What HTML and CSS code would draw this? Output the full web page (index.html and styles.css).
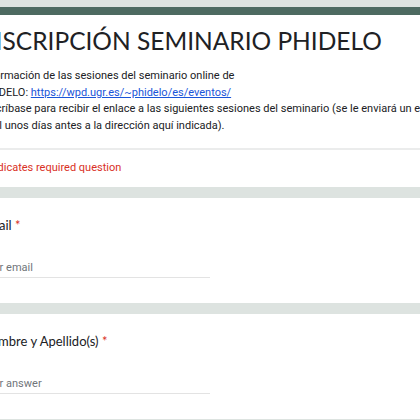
FILE: index.html
```html
<!DOCTYPE html>
<html lang="es">
<head>
<meta charset="utf-8">
<link rel="stylesheet" href="styles.css">
</head>
<body>
<div class="page">
  <div class="card card-head">
    <div class="head-body">
      <h1 class="title">INSCRIPCIÓN SEMINARIO PHIDELO</h1>
      <div class="desc">
        <div>Información de las sesiones del seminario online de</div>
        <div>PHIDELO: <a href="#">https://wpd.ugr.es/~phidelo/es/eventos/</a></div>
        <div>Inscríbase para recibir el enlace a las siguientes sesiones del seminario (se le enviará un enlace por</div>
        <div>mail unos días antes a la dirección aquí indicada).</div>
      </div>
    </div>
    <div class="required-note">* Indicates required question</div>
  </div>
  <div class="card question">
    <div class="q-title">Email <span class="star">*</span></div>
    <div class="q-input">Your email</div>
  </div>
  <div class="card question">
    <div class="q-title">Nombre y Apellido(s) <span class="star">*</span></div>
    <div class="q-input">Your answer</div>
  </div>
</div>
</body>
</html>
```
FILE: styles.css
```css
html, body {
  margin: 0;
  padding: 0;
  background: #dde3e0;
  overflow: hidden;
  width: 420px;
  height: 420px;
}
.page {
  margin-left: -19px;
  width: 600px;
  padding-top: 7px;
  font-family: Roboto, "Noto Sans", sans-serif;
}
.card {
  background: #fff;
  margin-bottom: 11px;
}
.card-head {
  border-top: 8px solid #4d6a61;
}
.head-body {
  padding: 8px 0 0 0;
  height: 135px;
  box-sizing: border-box;
  border-bottom: 2px solid #ebecec;
}
.title {
  margin: 0 0 0 -4px;
  font-family: Lato, "Open Sans", sans-serif;
  font-weight: 400;
  font-size: 24.5px;
  line-height: 36px;
  color: #202124;
}
.desc {
  margin-top: 9px;
  font-size: 11px;
  line-height: 16.7px;
  color: #202124;
}
.desc a {
  color: #1a55d9;
}
.required-note {
  height: 37px;
  line-height: 36px;
  font-size: 11px;
  color: #d93025;
}
.question {
  height: 105px;
  padding-top: 16px;
  box-sizing: border-box;
}
.q-title {
  font-family: Lato, "Open Sans", sans-serif;
  font-size: 13px;
  line-height: 22px;
  color: #202124;
}
.star {
  color: #d93025;
}
.q-input {
  margin-top: 24px;
  width: 229px;
  font-size: 11px;
  line-height: 16px;
  padding-bottom: 1px;
  color: #70757a;
  border-bottom: 1px solid #e3e3e3;
}
```
